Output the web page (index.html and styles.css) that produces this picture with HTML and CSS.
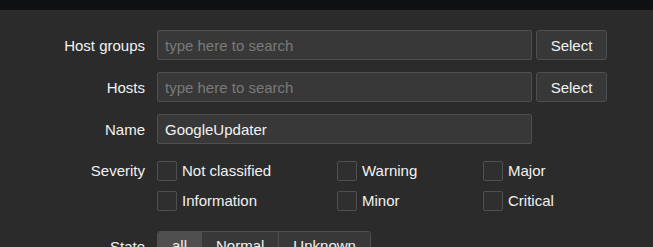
FILE: index.html
```html
<!DOCTYPE html>
<html lang="en">
<head>
    <meta charset="UTF-8">
    <title>Problems filter</title>
    <link rel="stylesheet" href="styles.css">
</head>
<body>
    <div class="top-bar"></div>

    <form class="filter-form">
        <div class="form-row">
            <label class="form-label">Host groups</label>
            <div class="form-field">
                <input type="text" class="text-input" placeholder="type here to search">
                <button type="button" class="btn-alt">Select</button>
            </div>
        </div>

        <div class="form-row">
            <label class="form-label">Hosts</label>
            <div class="form-field">
                <input type="text" class="text-input" placeholder="type here to search">
                <button type="button" class="btn-alt">Select</button>
            </div>
        </div>

        <div class="form-row">
            <label class="form-label">Name</label>
            <div class="form-field">
                <input type="text" class="text-input" value="GoogleUpdater">
            </div>
        </div>

        <div class="form-row severity-row">
            <label class="form-label">Severity</label>
            <div class="checkbox-list">
                <label class="checkbox"><span class="box"></span>Not classified</label>
                <label class="checkbox"><span class="box"></span>Warning</label>
                <label class="checkbox"><span class="box"></span>Major</label>
                <label class="checkbox"><span class="box"></span>Information</label>
                <label class="checkbox"><span class="box"></span>Minor</label>
                <label class="checkbox"><span class="box"></span>Critical</label>
            </div>
        </div>

        <div class="form-row state-row">
            <label class="form-label">State</label>
            <div class="segmented">
                <span class="segment selected">all</span>
                <span class="segment">Normal</span>
                <span class="segment">Unknown</span>
            </div>
        </div>
    </form>
</body>
</html>
```

FILE: styles.css
```css
body {
    margin: 0;
    padding: 0;
    background-color: #2b2b2b;
    color: #f2f2f2;
    font-family: "Liberation Sans", Arial, sans-serif;
    font-size: 15px;
    overflow: hidden;
}

.top-bar {
    height: 10px;
    background-color: #0e1012;
}

.filter-form {
    padding-top: 20px;
}

.form-row {
    display: flex;
    align-items: center;
    margin-bottom: 12px;
}

.form-label {
    width: 145px;
    padding-right: 12px;
    text-align: right;
    flex-shrink: 0;
}

.form-field {
    display: flex;
    gap: 4px;
}

.text-input {
    width: 375px;
    height: 30px;
    box-sizing: border-box;
    padding: 0 7px;
    background-color: #383838;
    border: 1px solid #4f4f4f;
    border-radius: 2px;
    color: #f2f2f2;
    font-family: inherit;
    font-size: 15px;
    outline: none;
}

.text-input::placeholder {
    color: #7a7a7a;
}

.btn-alt {
    width: 71px;
    height: 30px;
    background-color: #383838;
    border: 1px solid #4f4f4f;
    border-radius: 3px;
    color: #f2f2f2;
    font-family: inherit;
    font-size: 15px;
    cursor: pointer;
}

.severity-row {
    align-items: flex-start;
    margin-top: 17px;
    margin-bottom: 20px;
}

.severity-row .form-label {
    line-height: 20px;
}

.checkbox-list {
    display: grid;
    grid-template-columns: 180px 146px auto;
    row-gap: 10px;
}

.checkbox {
    display: flex;
    align-items: center;
    gap: 5px;
    line-height: 20px;
}

.checkbox .box {
    width: 20px;
    height: 20px;
    box-sizing: border-box;
    background-color: #2f2f2f;
    border: 1px solid #4f4f4f;
    border-radius: 2px;
}

.segmented {
    display: flex;
    height: 30px;
    box-sizing: border-box;
    border: 1px solid #4f4f4f;
    border-radius: 3px;
    overflow: hidden;
}

.segment {
    padding: 0 14px;
    line-height: 28px;
    background-color: #383838;
    border-left: 1px solid #4f4f4f;
}

.segment:first-child {
    border-left: none;
}

.segment.selected {
    background-color: #4f4f4f;
}
```
